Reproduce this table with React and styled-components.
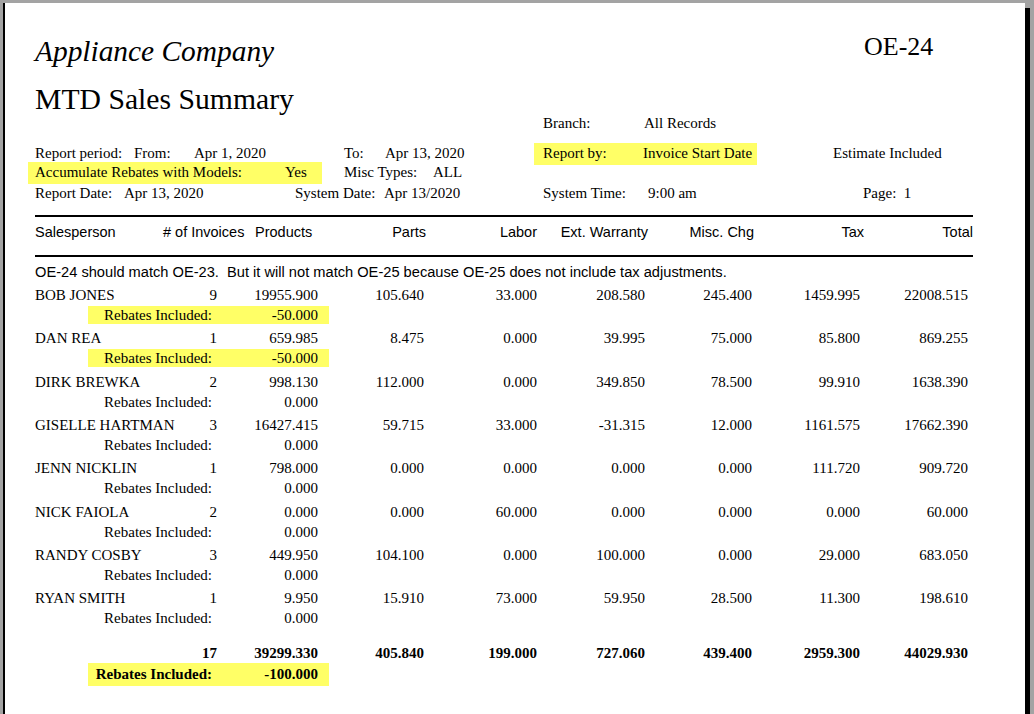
import styled, { createGlobalStyle } from "styled-components";

const GlobalStyle = createGlobalStyle`
     html, body {
          margin: 0;
          padding: 0;
          overflow: hidden;
          background: #a3a3a3;
     }
`;

const serif = `"Liberation Serif", "Times New Roman", serif`;
const sans = `"Liberation Sans", Arial, sans-serif`;
const yellow = "#ffff66";

const Page = styled.div`
     box-sizing: border-box;
     width: 1022px;
     min-height: 760px;
     margin: 3px 0 0 3px;
     padding: 27px 0 0 30px;
     background: #fff;
     border-left: 2px solid #000;
     box-shadow: 5px 5px 0 #000;
     color: #000;
     font-family: ${serif};
`;
const Content = styled.div`
     width: 938px;
     display: flex;
     flex-direction: column;
`;
const TitleRow = styled.div`
     display: grid;
     grid-template-columns: 1fr 109px;
     align-items: start;
`;
const Company = styled.div`
     margin-top: 3.5px;
     font-size: 29.4px;
     font-style: italic;
     line-height: 34px;
`;
const FormNo = styled.div`
     font-size: 26px;
     line-height: 34px;
`;
const ReportTitle = styled.div`
     margin-top: 17.5px;
     font-size: 29.7px;
     line-height: 28px;
     white-space: nowrap;
`;
const MetaRow = styled.div`
     display: flex;
     align-items: flex-start;
     height: ${({ h }) => h}px;
     font-size: 15px;
     line-height: 20px;
     white-space: nowrap;
`;
const Cell = styled.div`
     flex: none;
     width: ${({ w }) => (w ? `${w}px` : "auto")};
     margin-left: ${({ ml }) => ml || 0}px;
`;
const MetaMark = styled.div`
     flex: none;
     display: flex;
     box-sizing: border-box;
     width: ${({ w }) => w}px;
     margin-left: ${({ ml }) => ml || 0}px;
     padding: 0 0 2px ${({ pl }) => pl}px;
     background: ${yellow};
`;
const Rule = styled.div`
     height: 2px;
     background: #000;
     margin-top: ${({ mt }) => mt || 0}px;
`;
const HeadRow = styled.div`
     display: grid;
     grid-template-columns: 128px 92px 71px 100px 111px 111px 106px 110px 109px;
     padding: 4.5px 0 13.5px;
     font-family: ${sans};
     font-size: 14.5px;
     line-height: 20px;
     white-space: nowrap;
`;
const Head = styled.div`
     text-align: ${({ left }) => (left ? "left" : "right")};
`;
const Note = styled.div`
     margin-top: 5.3px;
     font-family: ${sans};
     font-size: 14.65px;
     line-height: 20px;
     white-space: pre;
`;
const Body = styled.div`
     margin-top: 2.7px;
     display: flex;
     flex-direction: column;
`;
const Group = styled.div`
     margin-bottom: 4.33px;
`;
const DataRow = styled.div`
     display: grid;
     grid-template-columns: 132px 50px 101px 106px 113px 108px 107px 108px 108px;
     margin-top: ${({ mt }) => mt || 0}px;
     font-size: 15px;
     font-weight: ${({ bold }) => (bold ? 700 : 400)};
     line-height: 20px;
     white-space: nowrap;
`;
const Num = styled.div`
     text-align: right;
`;
const RebateRow = styled.div`
     display: flex;
     margin-top: ${({ mt }) => mt}px;
     font-size: 15px;
     font-weight: ${({ bold }) => (bold ? 700 : 400)};
     line-height: ${({ lh }) => lh}px;
     white-space: nowrap;
`;
const RebateMark = styled.div`
     display: grid;
     grid-template-columns: 124px 106px;
     margin-left: 53px;
     padding-right: 11px;
     background: ${({ on }) => (on ? yellow : "transparent")};
     & > div {
          text-align: right;
     }
`;

const rows = [
     ["BOB JONES", "9", "19955.900", "105.640", "33.000", "208.580", "245.400", "1459.995", "22008.515", "-50.000", true],
     ["DAN REA", "1", "659.985", "8.475", "0.000", "39.995", "75.000", "85.800", "869.255", "-50.000", true],
     ["DIRK BREWKA", "2", "998.130", "112.000", "0.000", "349.850", "78.500", "99.910", "1638.390", "0.000"],
     ["GISELLE HARTMAN", "3", "16427.415", "59.715", "33.000", "-31.315", "12.000", "1161.575", "17662.390", "0.000"],
     ["JENN NICKLIN", "1", "798.000", "0.000", "0.000", "0.000", "0.000", "111.720", "909.720", "0.000"],
     ["NICK FAIOLA", "2", "0.000", "0.000", "60.000", "0.000", "0.000", "0.000", "60.000", "0.000"],
     ["RANDY COSBY", "3", "449.950", "104.100", "0.000", "100.000", "0.000", "29.000", "683.050", "0.000"],
     ["RYAN SMITH", "1", "9.950", "15.910", "73.000", "59.950", "28.500", "11.300", "198.610", "0.000"],
];
const totals = ["17", "39299.330", "405.840", "199.000", "727.060", "439.400", "2959.300", "44029.930"];

const App = () => {
     return (
          <>
               <GlobalStyle />
               <Page>
                    <Content>
                         <TitleRow>
                              <Company>Appliance Company</Company>
                              <FormNo>OE-24</FormNo>
                         </TitleRow>
                         <ReportTitle>MTD Sales Summary</ReportTitle>

                         <MetaRow h={30}>
                              <Cell w={508} />
                              <Cell w={101}>Branch:</Cell>
                              <Cell>All Records</Cell>
                         </MetaRow>
                         <MetaRow h={19}>
                              <Cell w={99}>Report period:</Cell>
                              <Cell w={60}>From:</Cell>
                              <Cell w={150}>Apr 1, 2020</Cell>
                              <Cell w={41}>To:</Cell>
                              <Cell w={149}>Apr 13, 2020</Cell>
                              <MetaMark w={223} pl={9}>
                                   <Cell w={100}>Report by:</Cell>
                                   <Cell>Invoice Start Date</Cell>
                              </MetaMark>
                              <Cell ml={76}>Estimate Included</Cell>
                         </MetaRow>
                         <MetaRow h={20.5}>
                              <MetaMark w={294} ml={-7} pl={7}>
                                   <Cell w={250}>Accumulate Rebates with Models:</Cell>
                                   <Cell>Yes</Cell>
                              </MetaMark>
                              <Cell w={89} ml={22}>Misc Types:</Cell>
                              <Cell>ALL</Cell>
                         </MetaRow>
                         <MetaRow h={20}>
                              <Cell w={89}>Report Date:</Cell>
                              <Cell w={171}>Apr 13, 2020</Cell>
                              <Cell w={89}>System Date:</Cell>
                              <Cell w={159}>Apr 13/2020</Cell>
                              <Cell w={105}>System Time:</Cell>
                              <Cell w={215}>9:00 am</Cell>
                              <Cell>Page:{"\u00a0 "}1</Cell>
                         </MetaRow>

                         <Rule mt={12.5} />
                         <HeadRow>
                              <Head left>Salesperson</Head>
                              <Head left># of Invoices</Head>
                              <Head left>Products</Head>
                              <Head>Parts</Head>
                              <Head>Labor</Head>
                              <Head>Ext. Warranty</Head>
                              <Head>Misc. Chg</Head>
                              <Head>Tax</Head>
                              <Head>Total</Head>
                         </HeadRow>
                         <Rule />
                         <Note>OE-24 should match OE-23.  But it will not match OE-25 because OE-25 does not include tax adjustments.</Note>

                         <Body>
                              {rows.map((row, index) => {
                                   return (
                                        <Group key={index}>
                                             <DataRow>
                                                  <div>{row[0]}</div>
                                                  {row.slice(1, 9).map((val, i) => (
                                                       <Num key={i}>{val}</Num>
                                                  ))}
                                             </DataRow>
                                             <RebateRow mt={1} lh={18}>
                                                  <RebateMark on={row[10]}>
                                                       <div>Rebates Included:</div>
                                                       <div>{row[9]}</div>
                                                  </RebateMark>
                                             </RebateRow>
                                        </Group>
                                   );
                              })}
                              <DataRow bold mt={11.5}>
                                   <div />
                                   {totals.map((val, i) => (
                                        <Num key={i}>{val}</Num>
                                   ))}
                              </DataRow>
                              <RebateRow bold mt={0} lh={23}>
                                   <RebateMark on>
                                        <div>Rebates Included:</div>
                                        <div>-100.000</div>
                                   </RebateMark>
                              </RebateRow>
                         </Body>
                    </Content>
               </Page>
          </>
     );
};
export default App;
